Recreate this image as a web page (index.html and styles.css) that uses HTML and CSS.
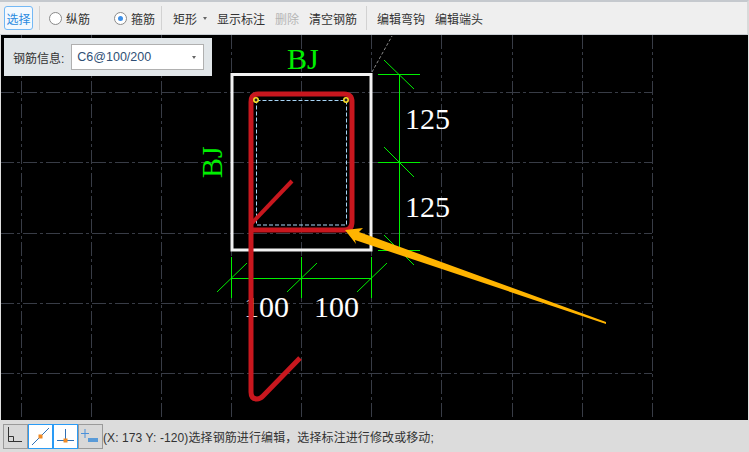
FILE: index.html
```html
<!DOCTYPE html>
<html lang="zh-CN">
<head>
<meta charset="UTF-8">
<title>钢筋编辑</title>
<link rel="stylesheet" href="styles.css">
</head>
<body>
<div class="app">
  <div class="toolbar">
    <button class="tool-select">选择</button>
    <span class="divider first"></span>
    <label class="radio"><span class="radio-dot"></span>纵筋</label>
    <label class="radio on"><span class="radio-dot"></span>箍筋</label>
    <span class="divider"></span>
    <span class="tool shape">矩形<span class="caret"></span></span>
    <span class="tool">显示标注</span>
    <span class="tool off">删除</span>
    <span class="tool">清空钢筋</span>
    <span class="divider"></span>
    <span class="tool">编辑弯钩</span>
    <span class="tool">编辑端头</span>
  </div>

  <div class="canvas">
    <svg class="drawing" width="749" height="385" viewBox="0 35 749 385">
      <g class="grid-v">
        <path d="M21.5 35V420M91.5 35V420M161.5 35V420M231.5 35V420M301.5 35V420M371.5 35V420M441.5 35V420M512.5 35V420M582.5 35V420M652.5 35V420"/>
      </g>
      <g class="grid-h">
        <path d="M0 92.5H652M0 162.5H652M0 233.5H652M0 303.5H652M0 373.5H652"/>
      </g>
      <path class="guide" d="M372 72L392 36"/>
      <g class="dim">
        <path d="M399.5 74V250M378 74.5H420M378 162.5H420M378 250.5H420"/>
        <path d="M384 60L414 89M384 147L414 177M384 235L414 265"/>
        <path d="M231.5 257V298M301.5 257V298M371.5 257V298M231 278.5H372"/>
        <path d="M217 292L247 263M287 292L317 263M357 292L387 263"/>
      </g>
      <rect class="section" x="232" y="74.5" width="139" height="175.5"/>
      <rect class="inner" x="256.5" y="100.5" width="90" height="124.5"/>
      <text class="label" x="287" y="69">BJ</text>
      <text class="label" transform="translate(222 178) rotate(-90)">BJ</text>
      <text class="size" x="405" y="129">125</text>
      <text class="size" x="405" y="217">125</text>
      <text class="size" x="244" y="317">100</text>
      <text class="size" x="314" y="317">100</text>
      <path class="bar" d="M251 230H344Q352 230 352 222V102Q352 94 344 94H258Q251 94 251 102V392Q251 399 257 399Q260 399 263 396L300 358"/>
      <path class="bar thin" d="M252 223L292 181"/>
      <circle class="pin" cx="256" cy="100" r="2.2"/>
      <circle class="pin" cx="346" cy="100" r="2.2"/>
      <polygon class="arrow" points="345,230 363,228 359,232 606,322 606,324 355,240 356,244"/>
    </svg>

    <div class="info">
      <span class="info-label">钢筋信息:</span>
      <div class="info-select">C6@100/200<span class="caret"></span></div>
    </div>
  </div>

  <div class="statusbar">
    <div class="snaps">
      <span class="snap">
        <svg width="23" height="23" viewBox="0 0 23 23"><path d="M4.5 2V16.5H18M4.5 11.5H9.5V16.5" fill="none" stroke="#333"/></svg>
      </span>
      <span class="snap on">
        <svg width="23" height="23" viewBox="0 0 23 23"><path d="M3 20L20 3" stroke="#2f6fb5"/><rect class="snap-mark" x="9.5" y="9.5" width="4" height="4"/></svg>
      </span>
      <span class="snap on">
        <svg width="23" height="23" viewBox="0 0 23 23"><path d="M11.5 4V15M3 15.5H20" stroke="#2f6fb5"/><rect class="snap-mark" x="9.5" y="13.5" width="4" height="4"/></svg>
      </span>
      <span class="snap">
        <svg width="23" height="23" viewBox="0 0 23 23"><path d="M2 8.5H10M6 4V13" stroke="#4a90d9"/><rect x="9" y="13" width="10" height="4" fill="#5a9bd8"/></svg>
      </span>
    </div>
    <span class="status-text">(X: 173 Y: -120)选择钢筋进行编辑，选择标注进行修改或移动;</span>
  </div>
</div>
</body>
</html>
```

FILE: styles.css
```css
html, body {
  margin: 0;
  padding: 0;
  background: #000;
}

.app {
  width: 749px;
  height: 452px;
  overflow: hidden;
  display: flex;
  flex-direction: column;
  font-family: "Liberation Sans", "Noto Sans CJK SC", sans-serif;
  font-size: 12px;
  color: #333;
}

.toolbar {
  height: 32px;
  flex: none;
  display: flex;
  align-items: center;
  padding-left: 4px;
  border-top: 2px solid #c5c9ce;
  border-bottom: 1px solid #c9cdd2;
  border-right: 2px solid #d9d9d9;
  background: #efefef;
}

.tool-select {
  width: 29px;
  height: 24px;
  padding: 0;
  border: 1px solid #73b8f5;
  border-radius: 3px;
  background: #f4f9fe;
  color: #2a8ae0;
  font: inherit;
}

.divider {
  width: 1px;
  height: 24px;
  margin: 0 10px 0 -1px;
  background: #d2d2d2;
}

.divider.first {
  margin: 0 9px 0 6px;
}

.radio {
  display: flex;
  align-items: center;
  gap: 4px;
  margin-right: 24px;
}

.radio + .divider {
  margin: 0 11px 0 -18px;
}

.radio-dot {
  width: 11px;
  height: 11px;
  border: 1px solid #8a8a8a;
  border-radius: 50%;
  background: #fff;
  position: relative;
}

.radio.on .radio-dot::after {
  content: "";
  position: absolute;
  left: 3px;
  top: 3px;
  width: 5px;
  height: 5px;
  border-radius: 50%;
  background: #3d8fe8;
}

.tool {
  margin-right: 10px;
}

.tool.off {
  color: #b5b5b5;
}

.tool.shape {
  display: flex;
  align-items: center;
}

.caret {
  display: inline-block;
  width: 0;
  height: 0;
  margin-left: 6px;
  border-left: 2.5px solid transparent;
  border-right: 2.5px solid transparent;
  border-top: 3px solid #666;
}

.canvas {
  position: relative;
  flex: 1;
  overflow: hidden;
  border-left: 1px solid #dfdfdf;
  border-right: 1px solid #dfdfdf;
  background: #000;
}

.drawing {
  display: block;
  margin-left: -1px;
}

.grid-v path,
.grid-h path {
  fill: none;
  stroke: #383c46;
  stroke-width: 1;
  stroke-dasharray: 14 3 3 3;
}

.guide {
  fill: none;
  stroke: #8a8a8a;
  stroke-dasharray: 3 2;
}

.dim path {
  fill: none;
  stroke: #00f000;
  stroke-width: 1;
}

.section {
  fill: none;
  stroke: #f2f2f2;
  stroke-width: 3;
}

.inner {
  fill: none;
  stroke: #a8d4f5;
  stroke-dasharray: 4 2;
}

.label {
  font-family: "Liberation Serif", serif;
  font-size: 30px;
  fill: #00f000;
}

.size {
  font-family: "Liberation Serif", serif;
  font-size: 30px;
  fill: #fff;
}

.bar {
  fill: none;
  stroke: #c8171e;
  stroke-width: 5;
}

.bar.thin {
  stroke-width: 4;
}

.pin {
  fill: #222;
  stroke: #ffe22a;
  stroke-width: 1.5;
}

.arrow {
  fill: #ffb400;
}

.info {
  position: absolute;
  left: 3px;
  top: 3px;
  width: 208px;
  height: 38px;
  box-sizing: border-box;
  display: flex;
  align-items: center;
  padding-left: 9px;
  gap: 7px;
  background: #e1e6e9;
}

.info-select {
  flex: none;
  width: 133px;
  height: 26px;
  box-sizing: border-box;
  display: flex;
  align-items: center;
  justify-content: space-between;
  padding: 0 7px 0 5px;
  border: 1px solid #b0b0b0;
  background: #fff;
  color: #2f4f75;
  font-size: 12.5px;
}

.statusbar {
  height: 32px;
  flex: none;
  display: flex;
  align-items: center;
  padding-left: 3px;
  background: #dcdcdc;
}

.snaps {
  display: flex;
}

.snap {
  width: 25px;
  height: 25px;
  box-sizing: border-box;
  border: 1px solid #9a9a9a;
  background: #d8d8d8;
  display: flex;
  align-items: center;
  justify-content: center;
}

.snap.on {
  border-color: #2a9bf5;
  background: #fff;
}

.snap-mark {
  fill: #f08a24;
}

.status-text {
  color: #333;
  letter-spacing: 0.1px;
}
```
